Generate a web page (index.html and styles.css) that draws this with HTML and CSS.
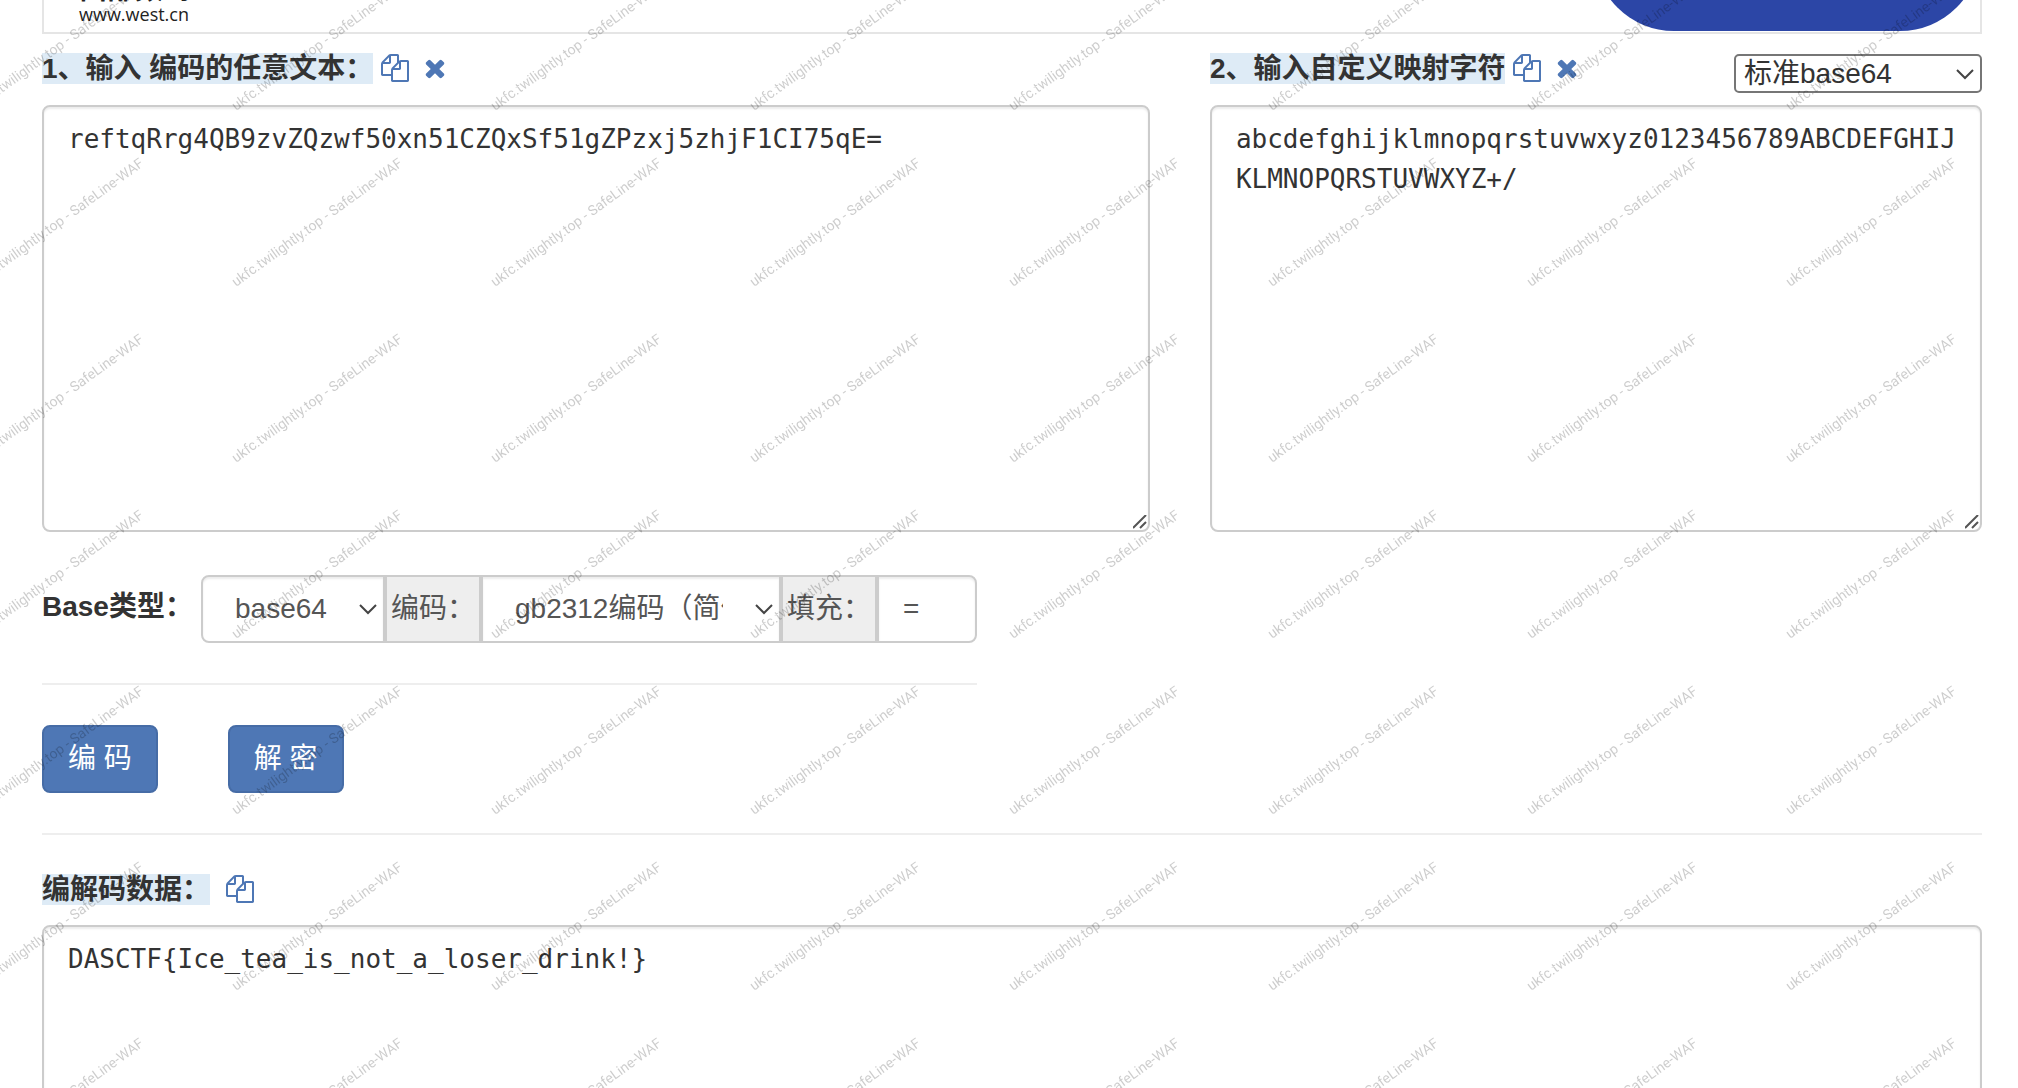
FILE: index.html
```
<!DOCTYPE html>
<html lang="zh">
<head>
	<meta charset="UTF-8" />
	<title>自定义base64编码解码</title>
	<link rel="stylesheet" href="styles.css">
</head>
<body>

<!-- 图标 -->
<svg class="symbols" aria-hidden="true">
	<symbol id="icon-copy" viewBox="0 0 1792 1792">
		<path d="M1696 384q40 0 68 28t28 68v1216q0 40-28 68t-68 28h-960q-40 0-68-28t-28-68v-288h-544q-40 0-68-28t-28-68v-672q0-40 20-88t48-76l408-408q28-28 76-48t88-20h416q40 0 68 28t28 68v328q68-40 128-40h416zm-544 213l-299 299h299v-299zm-640-384l-299 299h299v-299zm196 647l316-316v-416h-384v416q0 40-28 68t-68 28h-416v640h512v-256q0-40 20-88t48-76zm956 804v-1152h-384v416q0 40-28 68t-68 28h-416v640h896z"/>
	</symbol>
	<symbol id="icon-times" viewBox="0 0 1792 1792">
		<path d="M1490 1322q0 40-28 68l-136 136q-28 28-68 28t-68-28l-294-294-294 294q-28 28-68 28t-68-28l-136-136q-28-28-28-68t28-68l294-294-294-294q-28-28-28-68t28-68l136-136q28-28 68-28t68 28l294 294 294-294q28-28 68-28t68 28l136 136q28 28 28 68t-28 68l-294 294 294 294q28 28 28 68z"/>
	</symbol>
</svg>

<div class="container">

	<!-- 广告 -->
	<div class="ad">
		<div class="ad-logo">
			<div class="ad-name">西部数码</div>
			<div class="ad-url">www.west.cn</div>
		</div>
		<div class="ad-pill"></div>
	</div>

	<div class="inputs">
		<div class="col-text">
			<div class="head">
				<label class="title" for="source"><span class="mark">1、输入 编码的任意文本：</span></label>
				<button class="icon" type="button" aria-label="复制"><svg><use href="#icon-copy"/></svg></button>
				<button class="icon" type="button" aria-label="清空"><svg><use href="#icon-times"/></svg></button>
			</div>
			<textarea class="box" id="source" spellcheck="false">reftqRrg4QB9zvZQzwf50xn51CZQxSf51gZPzxj5zhjF1CI75qE=</textarea>
		</div>
		<div class="col-map">
			<div class="head">
				<label class="title" for="table"><span class="mark">2、输入自定义映射字符</span></label>
				<button class="icon" type="button" aria-label="复制"><svg><use href="#icon-copy"/></svg></button>
				<button class="icon" type="button" aria-label="清空"><svg><use href="#icon-times"/></svg></button>
				<select class="preset" aria-label="映射表">
					<option>标准base64</option>
				</select>
			</div>
			<textarea class="box" id="table" spellcheck="false">abcdefghijklmnopqrstuvwxyz0123456789ABCDEFGHIJKLMNOPQRSTUVWXYZ+/</textarea>
		</div>
	</div>

	<!-- 选项 -->
	<div class="options">
		<label class="title" for="type">Base类型：</label>
		<div class="group">
			<select class="control type" id="type">
				<option>base64</option>
			</select>
			<label class="addon" for="charset">编码：</label>
			<select class="control charset" id="charset">
				<option>gb2312编码（简体）</option>
			</select>
			<label class="addon" for="pad">填充：</label>
			<input class="control pad" type="text" id="pad" value="=">
		</div>
	</div>

	<div class="buttons">
		<button class="btn" type="button">编 码</button>
		<button class="btn" type="button">解 密</button>
	</div>

	<div class="head result-head">
		<label class="title" for="result"><span class="mark">编解码数据：</span></label>
		<button class="icon" type="button" aria-label="复制"><svg><use href="#icon-copy"/></svg></button>
	</div>
	<textarea class="box" id="result" spellcheck="false">DASCTF{Ice_tea_is_not_a_loser_drink!}</textarea>
</div>

<!-- 水印 -->
<svg class="watermark" aria-hidden="true">
	<defs>
		<pattern id="wm" x="218" y="130" width="259" height="176" patternUnits="userSpaceOnUse">
			<text transform="translate(18 157) rotate(-36)">ukfc.twilightly.top - SafeLine-WAF</text>
		</pattern>
	</defs>
	<rect width="100%" height="100%" fill="url(#wm)"/>
</svg>

</body>
</html>
```
FILE: styles.css
```
* {
	box-sizing: border-box;
}

body {
	margin: 0;
	height: 100vh;
	overflow: hidden;
	background-color: #fff;
	color: #333;
	font-family: "Liberation Sans", "Noto Sans CJK SC", sans-serif;
	font-size: 28px;
	line-height: 40px;
}

button, select, input {
	font: inherit;
	margin: 0;
}

.symbols {
	display: none;
}

.container {
	padding: 0 36px 0 42px;
}

/* 广告 */
.ad {
	display: flex;
	justify-content: space-between;
	align-items: flex-end;
	height: 34px;
	padding-left: 35px;
	border: 2px solid #e5e5e5;
	border-top: none;
	overflow: hidden;
}

.ad-logo {
	color: #222;
	padding-bottom: 6px;
}

.ad-name {
	font-size: 28px;
	font-weight: bold;
	line-height: 26px;
}

.ad-url {
	font-family: "Open Sans", sans-serif;
	font-size: 18px;
	line-height: 23px;
}

.ad-pill {
	width: 386px;
	height: 160px;
	margin-bottom: 1px;
	border-radius: 80px;
	background-color: #2c46a6;
}

/* 输入区 */
.inputs {
	display: flex;
	justify-content: space-between;
}

.col-text {
	width: 57.1%;
}

.col-map {
	width: 39.8%;
}

.head {
	display: flex;
	align-items: flex-start;
	height: 71px;
	padding: 15px 0 12px;
}

.title {
	font-weight: bold;
	white-space: nowrap;
}

.mark {
	background-color: #deebf6;
}

.icon {
	width: 28px;
	height: 28px;
	margin: 5px 4px 0 8px;
	padding: 0;
	border: none;
	background: none;
	cursor: pointer;
}

.icon svg {
	display: block;
	width: 28px;
	height: 28px;
	fill: #4e77b5;
}

select {
	appearance: none;
	background: #fff url("data:image/svg+xml,%3Csvg xmlns='http://www.w3.org/2000/svg' width='18' height='12'%3E%3Cpath d='M1 2l8 8 8-8' fill='none' stroke='%23444' stroke-width='2'/%3E%3C/svg%3E") no-repeat right 6px center;
}

.preset {
	width: 248px;
	height: 39px;
	margin-left: auto;
	align-self: flex-end;
	padding: 0 32px 0 8px;
	border: 2px solid #767676;
	border-radius: 5px;
	color: #333;
	line-height: 32px;
}

.box {
	display: block;
	width: 100%;
	height: 427px;
	padding: 12px 20px 12px 24px;
	border: 2px solid #ccc;
	border-radius: 8px;
	box-shadow: inset 0 2px 2px rgba(0, 0, 0, 0.075);
	background-color: #fff;
	color: #333;
	font-family: "DejaVu Sans Mono", monospace;
	font-size: 26px;
	line-height: 40px;
	outline: none;
}

.box::-webkit-resizer {
	background: url("data:image/svg+xml,%3Csvg xmlns='http://www.w3.org/2000/svg' width='15' height='15'%3E%3Cpath d='M0 13L13 0M7 13l6-6' fill='none' stroke='%23555' stroke-width='2'/%3E%3C/svg%3E") no-repeat right bottom;
}

/* 选项 */
.options {
	display: flex;
	width: 935px;
	margin-top: 43px;
	padding-bottom: 40px;
	border-bottom: 2px solid #eee;
}

.options .title {
	padding-top: 12px;
}

.group {
	display: flex;
	width: 776px;
	height: 68px;
	margin-left: auto;
	color: #555;
}

.control {
	border: 2px solid #ccc;
	box-shadow: inset 0 2px 2px rgba(0, 0, 0, 0.075);
	color: #555;
	outline: none;
}

.type {
	width: 184px;
	padding: 0 32px;
	border-radius: 8px 0 0 8px;
}

.charset {
	width: 300px;
	padding: 0 56px 0 32px;
}

.pad {
	width: 100px;
	padding: 0 24px;
	border-radius: 0 8px 8px 0;
}

.addon {
	width: 96px;
	padding: 12px 4px;
	border: 2px solid #ccc;
	background-color: #eee;
	white-space: nowrap;
}

/* 按钮 */
.buttons {
	display: flex;
	gap: 70px;
	padding: 40px 0;
	border-bottom: 2px solid #eee;
}

.btn {
	height: 68px;
	padding: 0 24px;
	border: 2px solid #466ca6;
	border-radius: 8px;
	background-color: #4e77b5;
	color: #fff;
	cursor: pointer;
}

.result-head {
	height: 90px;
	padding-top: 35px;
}

.result-head .icon {
	margin-left: 16px;
}

/* 水印 */
.watermark {
	position: absolute;
	top: 0;
	left: 0;
	width: 100%;
	height: 100%;
	pointer-events: none;
	font-family: Roboto, sans-serif;
	font-size: 14px;
	fill: rgba(0, 0, 0, 0.2);
}
```
